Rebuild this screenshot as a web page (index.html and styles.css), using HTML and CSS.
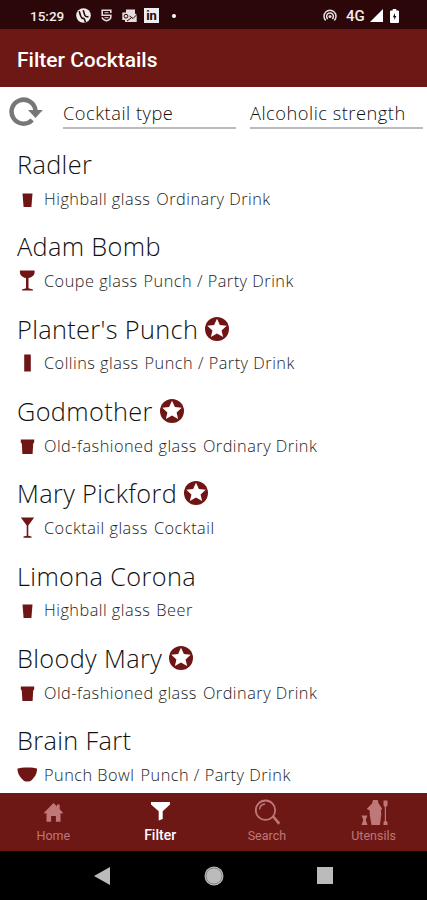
FILE: index.html
```html
<!DOCTYPE html>
<html lang="en">
<head>
  <meta charset="UTF-8">
  <meta name="viewport" content="width=device-width, initial-scale=1.0">
  <title>Filter Cocktails</title>
  <link rel="stylesheet" href="styles.css">
</head>
<body>

<!-- Shared shapes -->
<svg class="sprite" width="0" height="0">
  <symbol id="star" viewBox="0 0 24 24">
    <circle cx="12" cy="12" r="12" fill="#701515"/>
    <path d="M12 1.800l2.900 6.300 6.800.7-5.100 4.600 1.500 6.700-6.100-3.500-6.100 3.500 1.500-6.700-5.100-4.600 6.800-.7z" fill="#fff"/>
  </symbol>
  <symbol id="highball" viewBox="0 0 20 22">
    <path d="M5.500 5.500h10l-1.100 13.500H6.600z"/>
  </symbol>
  <symbol id="coupe" viewBox="0 0 20 22">
    <path d="M3 .5h14.500c.8 4-1.800 6.800-6 7.500v10.200l4.500 1.200v1.100H5v-1.100l4-1.200V8C4.800 7.300 2.200 4.500 3 .5z"/>
  </symbol>
  <symbol id="collins" viewBox="0 0 20 22">
    <path d="M7.200 2.500h6.600v17H7.200z"/>
  </symbol>
  <symbol id="oldfashioned" viewBox="0 0 20 22">
    <path d="M3.800 4.500h13.400v3l-1 1-.6 10.500H5.400l-.6-10.500-1-1z"/>
  </symbol>
  <symbol id="martini" viewBox="0 0 20 22">
    <path d="M3.800.5h13.400l-5.900 8v10.300l3.200.8v1.200h-8v-1.200l3.200-.8V8.500z"/>
  </symbol>
  <symbol id="bowl" viewBox="0 0 20 22">
    <path d="M.5 4.500c3-1.500 17-1.500 19.500 0 .3 6-4 10.500-6.500 12.500q-3.200 1.200-6.400 0C4.500 15 .2 10.500.5 4.500z"/>
  </symbol>
</svg>

<div class="status-bar">
  <span class="clock">15:29</span>
  <svg class="st-torrent" width="15" height="15" viewBox="0 0 15 15">
    <circle cx="7.500" cy="7.500" r="7.300" fill="#eee"/>
    <path d="M3.200 3.200l1.600 5q1 2.600 3.200 2.100M7.200 2.300l1.600 4.900q.9 2.200 3.700 1.300M8 10.300l1.500 4" fill="none" stroke="#2b0709" stroke-width="1.600"/>
  </svg>
  <svg class="st-shield" width="11" height="13" viewBox="0 0 11 13">
    <path d="M9.800 4V1.200H1.200v5h8.600v2q0 2.300-4.300 3.600-4.300-1.300-4.300-3.600" fill="none" stroke="#e5dddd" stroke-width="1.600"/>
    <path d="M3.500 3.700h4M3.500 8.700h4" stroke="#e5dddd" stroke-width="1"/>
  </svg>
  <svg class="st-mail" width="15" height="14" viewBox="0 0 15 14">
    <path d="M4 .5h9v4l1.700 1.200V13H3v-2H.3V3.500H4z" fill="#e5dddd"/>
    <circle cx="4" cy="7.200" r="1.900" fill="none" stroke="#2b0709"/>
    <path d="M7.500 7l3.500 2.500L14.500 6M5 12l4-3" fill="none" stroke="#2b0709"/>
  </svg>
  <span class="st-linkedin">in</span>
  <span class="st-dot"></span>
  <svg class="st-hotspot" width="14" height="13" viewBox="0 0 14 13">
    <path d="M2.700 11.500a6 6 0 1 1 8.600 0M4.800 10a3.400 3.400 0 1 1 4.400 0" fill="none" stroke="#e5dddd" stroke-width="1.500"/>
    <circle cx="7" cy="7.500" r="1.500" fill="#e5dddd"/>
  </svg>
  <span class="network">4G</span>
  <svg class="st-signal" width="13" height="13" viewBox="0 0 13 13"><path d="M13 0v13H0z" fill="#fff"/></svg>
  <svg class="st-battery" width="9" height="14" viewBox="0 0 9 14">
    <path d="M2.700 0h3.600v1.500H8q1 0 1 1V13q0 1-1 1H1q-1 0-1-1V2.500q0-1 1-1h1.700z" fill="#fff"/>
    <path d="M5 4L2.800 8.300h1.500V11l2.100-4H5z" fill="#2b0709"/>
  </svg>
</div>

<header>
  <h1>Filter Cocktails</h1>
</header>

<div class="filters">
  <svg class="refresh" width="34" height="30" viewBox="0 0 34 30">
    <path d="M23.200 23A12 12 0 1 1 26.500 13.500" fill="none" stroke="#777" stroke-width="4.500"/>
    <path d="M19 13h14.800l-7.300 8z" fill="#777"/>
  </svg>
  <div class="field">Cocktail type</div>
  <div class="field strength">Alcoholic strength</div>
</div>

<main>
  <div class="drink">
    <h2>Radler</h2>
    <p><svg class="glass"><use href="#highball"/></svg><span>Highball glass</span><span>Ordinary Drink</span></p>
  </div>
  <div class="drink">
    <h2>Adam Bomb</h2>
    <p><svg class="glass"><use href="#coupe"/></svg><span>Coupe glass</span><span>Punch / Party Drink</span></p>
  </div>
  <div class="drink">
    <h2>Planter's Punch <svg class="star"><use href="#star"/></svg></h2>
    <p><svg class="glass"><use href="#collins"/></svg><span>Collins glass</span><span>Punch / Party Drink</span></p>
  </div>
  <div class="drink">
    <h2>Godmother <svg class="star"><use href="#star"/></svg></h2>
    <p><svg class="glass"><use href="#oldfashioned"/></svg><span>Old-fashioned glass</span><span>Ordinary Drink</span></p>
  </div>
  <div class="drink">
    <h2>Mary Pickford <svg class="star"><use href="#star"/></svg></h2>
    <p><svg class="glass"><use href="#martini"/></svg><span>Cocktail glass</span><span>Cocktail</span></p>
  </div>
  <div class="drink">
    <h2>Limona Corona</h2>
    <p><svg class="glass"><use href="#highball"/></svg><span>Highball glass</span><span>Beer</span></p>
  </div>
  <div class="drink">
    <h2>Bloody Mary <svg class="star"><use href="#star"/></svg></h2>
    <p><svg class="glass"><use href="#oldfashioned"/></svg><span>Old-fashioned glass</span><span>Ordinary Drink</span></p>
  </div>
  <div class="drink">
    <h2>Brain Fart</h2>
    <p><svg class="glass"><use href="#bowl"/></svg><span>Punch Bowl</span><span>Punch / Party Drink</span></p>
  </div>
</main>

<nav class="tabs">
  <a class="tab">
    <svg width="28" height="28" viewBox="0 0 28 28"><path d="M14.500 5l3.500 3.600V6.500h2.700v4.800l3.300 3.500-1 1-1.500-.8v8.700h-4.600v-5.600h-4.800v5.600H7.500V15l-1.500.8-1-1z"/></svg>
    <span>Home</span>
  </a>
  <a class="tab active">
    <svg width="28" height="28" viewBox="0 0 28 28"><path d="M5 4h19v2.500L16.700 13.300V21l-4 1.500v-9.200L5 6.500z"/></svg>
    <span>Filter</span>
  </a>
  <a class="tab">
    <svg width="28" height="28" viewBox="0 0 28 28">
      <circle cx="12.500" cy="12.200" r="9.700" fill="none" stroke="#bf7778" stroke-width="1.800"/>
      <path d="M6.500 11.500a6 6 0 0 1 5.500-5.500" fill="none" stroke="#bf7778" stroke-width="1.300"/>
      <path d="M19 19l1.700-1.700 6.500 7.500-1.900 1.900z"/>
    </svg>
    <span>Search</span>
  </a>
  <a class="tab">
    <svg width="28" height="28" viewBox="0 0 28 28">
      <path d="M13 2h4.800l.7 3.300 3.500 5.200-1 2 .3 4L19.900 27h-8.400L9.700 16.500v-4l-3-1.500L12 5.500z"/>
      <path d="M1.500 17.500h6L5.700 22l1.800 5h-6l1.800-5zM23.500 2.500h4v5l-1.500 1.500v14l1.500 1v3h-4v-3l1.300-1V9l-1.300-1.500z"/>
    </svg>
    <span>Utensils</span>
  </a>
</nav>

<footer class="system-nav">
  <svg width="16" height="18" viewBox="0 0 16 18"><path d="M16 0v18L0 9z"/></svg>
  <svg width="20" height="20" viewBox="0 0 20 20"><circle cx="10" cy="10" r="9.500"/><circle cx="10" cy="10" r="8" fill="none" stroke="#777" stroke-width=".8"/></svg>
  <svg width="16" height="17" viewBox="0 0 16 17"><path d="M0 0h16v17H0z"/></svg>
</footer>

</body>
</html>
```
FILE: styles.css
```css
/* Basic reset */
*, *::before, *::after {
  box-sizing: border-box;
}

body {
  margin: 0;
  display: flex;
  flex-direction: column;
  width: 427px;
  height: 900px;
  overflow: hidden;
  background: #fff;
  color: #111;
  font-family: 'Open Sans', sans-serif;
}

svg {
  flex: none;
}

.sprite {
  display: none;
}

/* Status bar */
.status-bar {
  display: flex;
  align-items: center;
  flex: none;
  height: 29px;
  padding: 2px 28px 0 30px;
  background: #2b0709;
  color: #f5eeee;
  font-family: 'Roboto', sans-serif;
  font-weight: 500;
}

.clock {
  width: 46px;
  font-size: 13.5px;
}

.st-shield {
  margin-left: 10px;
}

.st-mail {
  margin-left: 10px;
}

.st-linkedin {
  width: 15px;
  height: 15px;
  margin-left: 7px;
  background: #eee;
  color: #2b0709;
  font-size: 13px;
  font-weight: 700;
  line-height: 15px;
  text-align: center;
}

.st-dot {
  width: 4px;
  height: 4px;
  margin-left: 13px;
  border-radius: 50%;
  background: #fff;
}

.st-hotspot {
  margin-left: auto;
}

.network {
  width: 24px;
  margin-left: 9px;
  font-size: 15px;
}

.st-battery {
  margin-left: 7px;
}

/* Header */
header {
  display: flex;
  align-items: center;
  flex: none;
  height: 58px;
  padding: 3px 17px 0;
  background: #6e1816;
}

h1 {
  margin: 0;
  color: #fff;
  font-family: 'Roboto', sans-serif;
  font-size: 21px;
  font-weight: 500;
}

/* Filters */
.filters {
  display: flex;
  flex: none;
  height: 52px;
  padding: 9px 3px 0 9px;
}

.refresh {
  margin-top: 1px;
}

.field {
  width: 173px;
  height: 33px;
  margin-left: 20px;
  border-bottom: 2px solid #bbb;
  font-size: 18.3px;
  line-height: 33px;
  font-weight: 300;
  letter-spacing: 0.5px;
}

.strength {
  margin-left: 14px;
}

/* Drinks list */
main {
  flex: 1;
  min-height: 0;
  padding-left: 17px;
  overflow: hidden;
}

.drink {
  height: 82.35px;
  padding-top: 7px;
}

h2 {
  display: flex;
  align-items: center;
  gap: 7px;
  height: 36px;
  margin: 0;
  font-size: 25.3px;
  font-weight: 300;
  letter-spacing: 0.36px;
}

.star {
  width: 24px;
  height: 24px;
}

p {
  display: flex;
  align-items: center;
  height: 33px;
  margin: 0;
  color: #222;
  font-size: 16.3px;
  font-weight: 300;
  letter-spacing: 0.5px;
}

.glass {
  width: 20px;
  height: 22px;
  margin-right: 7px;
  fill: #701515;
}

p span + span {
  margin-left: 6px;
}

/* Bottom tabs */
.tabs {
  display: flex;
  flex: none;
  height: 58px;
  background: #6e1816;
}

.tab {
  display: flex;
  flex: 1;
  flex-direction: column;
  align-items: center;
  padding-top: 5px;
  color: #bf7778;
  fill: #bf7778;
  font-family: 'Roboto', sans-serif;
  font-size: 12.5px;
  line-height: 20px;
}

.active {
  color: #fff;
  fill: #fff;
  font-size: 14px;
  font-weight: 500;
  line-height: 19px;
}

/* Android navigation */
.system-nav {
  display: flex;
  align-items: center;
  justify-content: space-between;
  flex: none;
  height: 49px;
  padding: 0 94px;
  background: #000;
  fill: #bbb;
}
```
